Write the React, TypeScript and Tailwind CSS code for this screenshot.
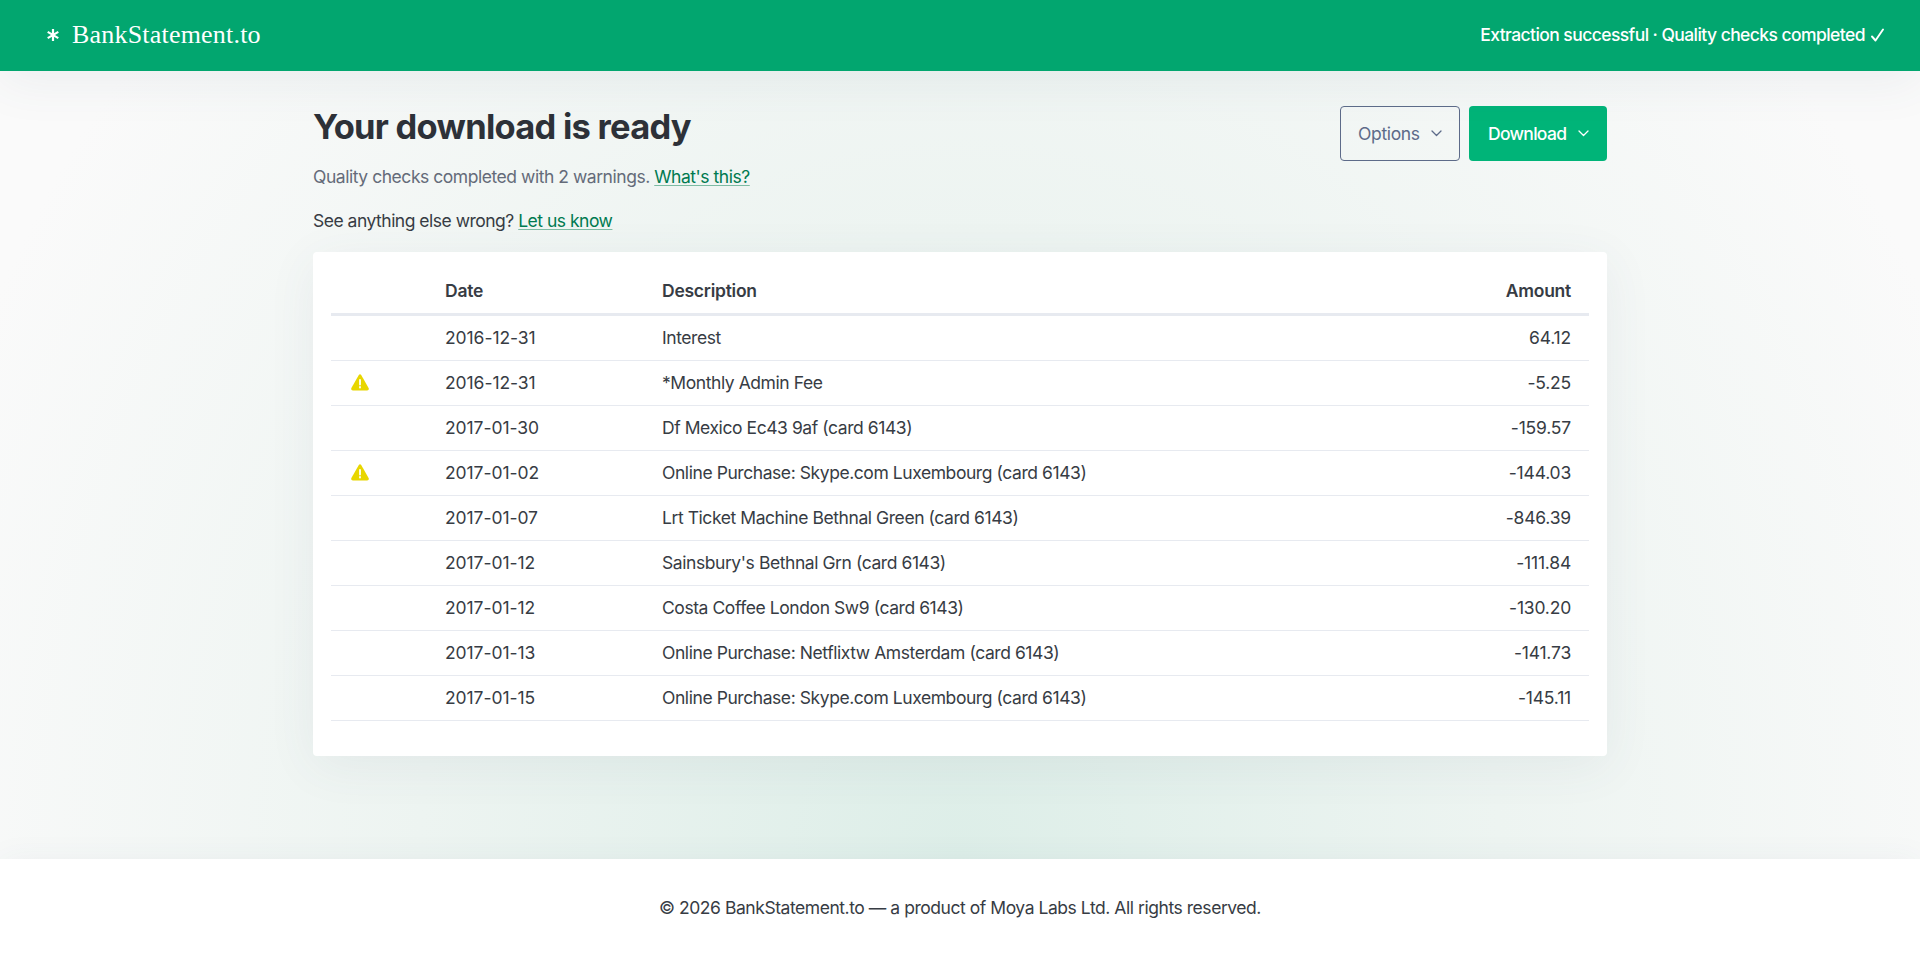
import React from "react";

const App = () => {
  const transactions = [
    { date: "2016-12-31", description: "Interest", amount: "64.12", warning: false },
    { date: "2016-12-31", description: "*Monthly Admin Fee", amount: "-5.25", warning: true },
    { date: "2017-01-30", description: "Df Mexico Ec43 9af (card 6143)", amount: "-159.57", warning: false },
    { date: "2017-01-02", description: "Online Purchase: Skype.com Luxembourg (card 6143)", amount: "-144.03", warning: true },
    { date: "2017-01-07", description: "Lrt Ticket Machine Bethnal Green (card 6143)", amount: "-846.39", warning: false },
    { date: "2017-01-12", description: "Sainsbury's Bethnal Grn (card 6143)", amount: "-111.84", warning: false },
    { date: "2017-01-12", description: "Costa Coffee London Sw9 (card 6143)", amount: "-130.20", warning: false },
    { date: "2017-01-13", description: "Online Purchase: Netflixtw Amsterdam (card 6143)", amount: "-141.73", warning: false },
    { date: "2017-01-15", description: "Online Purchase: Skype.com Luxembourg (card 6143)", amount: "-145.11", warning: false },
  ];

  return (
    <div className="flex flex-col h-[974px] overflow-hidden bg-[#fafafa] font-['Inter',sans-serif] text-[17.5px] leading-[27px] tracking-[-0.45px] text-[#373c44]">
      {/* Header */}
      <header className="relative z-10 flex h-[71px] shrink-0 items-center justify-between bg-[#02a66f] pl-[47px] pr-[36px] text-white shadow-[0_10px_50px_rgba(65,84,120,0.08)]">
        <div className="flex items-center pb-[2px]">
          <svg width="12" height="14" viewBox="0 0 12 14" fill="none" stroke="currentColor" strokeWidth="2.2">
            <path d="M6 1v12M.7 3.9l10.6 6.2M11.3 3.9L.7 10.1" />
          </svg>
          <span className="ml-[13px] font-['Palatino','Liberation_Serif',serif] text-[26px] tracking-[0.2px]">BankStatement.to</span>
        </div>
        <div className="flex items-center pb-[2px] font-medium">
          <span className="tracking-[-0.57px]">Extraction successful · Quality checks completed</span>
          <svg className="ml-[6px]" width="13" height="14" viewBox="0 0 13 14" fill="none" stroke="currentColor" strokeWidth="1.9" strokeLinecap="round" strokeLinejoin="round">
            <path d="M1 8.5L4.5 12.5L12 1.5" />
          </svg>
        </div>
      </header>

      {/* Main content */}
      <main className="h-[788px] shrink-0 bg-[radial-gradient(1080px_1250px_at_50%_100%,#ddeee8_0%,#edf4f1_50%,#fafafa_100%)]">
        <div className="mx-auto w-[1294px] pt-[35px]">
          <div className="flex h-[146px] items-start justify-between">
            <div>
              <h1 className="text-[34.5px] font-bold leading-[42px] tracking-[-0.74px] text-[#2d3138]">Your download is ready</h1>
              <p className="mt-[15px] tracking-[-0.46px] text-[#646b79]">
                Quality checks completed with 2 warnings.{" "}
                <a href="#" className="text-[#007a50] underline decoration-[#7dbba3] decoration-1 underline-offset-[2px]">What's this?</a>
              </p>
              <p className="mt-[17px] tracking-[-0.5px]">
                See anything else wrong?{" "}
                <a href="#" className="text-[#007a50] underline decoration-[#7dbba3] decoration-1 underline-offset-[2px]">Let us know</a>
              </p>
            </div>
            <div className="flex gap-[9px]">
              <button className="flex h-[55px] w-[120px] items-center justify-between rounded-[4px] border border-[#5d6b89] pl-[17px] pr-[17px] tracking-[-0.35px] text-[#5d6b89]">
                Options
                <Chevron />
              </button>
              <button className="flex h-[55px] w-[138px] items-center justify-between rounded-[4px] bg-[#00b478] pl-[19px] pr-[18px] font-medium tracking-[-0.7px] text-white">
                Download
                <Chevron />
              </button>
            </div>
          </div>

          {/* Transactions */}
          <div className="h-[504px] rounded-[4px] bg-white px-[18px] pt-[16px] shadow-[0_10px_50px_rgba(65,84,120,0.07)]">
            <table className="w-full table-fixed border-separate border-spacing-0 text-left">
              <thead className="tracking-[-0.25px]">
                <tr className="h-[48px]">
                  <th className="w-[96px] border-b-[3px] border-[#e7eaf0]"></th>
                  <th className="w-[217px] border-b-[3px] border-[#e7eaf0] pl-[18px] font-semibold">Date</th>
                  <th className="border-b-[3px] border-[#e7eaf0] pl-[18px] font-semibold">Description</th>
                  <th className="w-[200px] border-b-[3px] border-[#e7eaf0] pr-[18px] text-right font-semibold">Amount</th>
                </tr>
              </thead>
              <tbody>
                {transactions.map((row, index) => (
                  <tr key={index} className="h-[45px]">
                    <td className="border-b border-[#e7eaf0] pb-[2px] pl-[20px]">{row.warning && <Warning />}</td>
                    <td className="border-b border-[#e7eaf0] pb-[1px] pl-[18px] tracking-[-0.07px]">{row.date}</td>
                    <td className="border-b border-[#e7eaf0] pb-[1px] pl-[18px] tracking-[-0.43px]">{row.description}</td>
                    <td className="border-b border-[#e7eaf0] pb-[1px] pr-[18px] text-right tracking-[-0.2px]">{row.amount}</td>
                  </tr>
                ))}
              </tbody>
            </table>
          </div>
        </div>
      </main>

      {/* Footer */}
      <footer className="relative h-[115px] shrink-0 bg-white pt-[35px] text-center shadow-[0_0_30px_rgba(65,84,120,0.05)]">
        © 2026 BankStatement.to — a product of Moya Labs Ltd. All rights reserved.
      </footer>
    </div>
  );
};

const Chevron = () => (
  <svg width="11" height="7" viewBox="0 0 11 7" fill="none" stroke="currentColor" strokeWidth="1.3" strokeLinecap="round" strokeLinejoin="round">
    <path d="M1 1l4.5 4.5L10 1" />
  </svg>
);

const Warning = () => (
  <svg width="18" height="17" viewBox="0 0 18 17">
    <path d="M7.8 1.1Q9 -.6 10.2 1.1L17.6 14Q18.4 16.3 16.2 16.5H1.8Q-.4 16.3 .4 14Z" fill="#e8d600" />
    <path d="M9 6v4.5M9 13v.6" stroke="#fff" strokeWidth="1.8" strokeLinecap="round" />
  </svg>
);

export default App;
